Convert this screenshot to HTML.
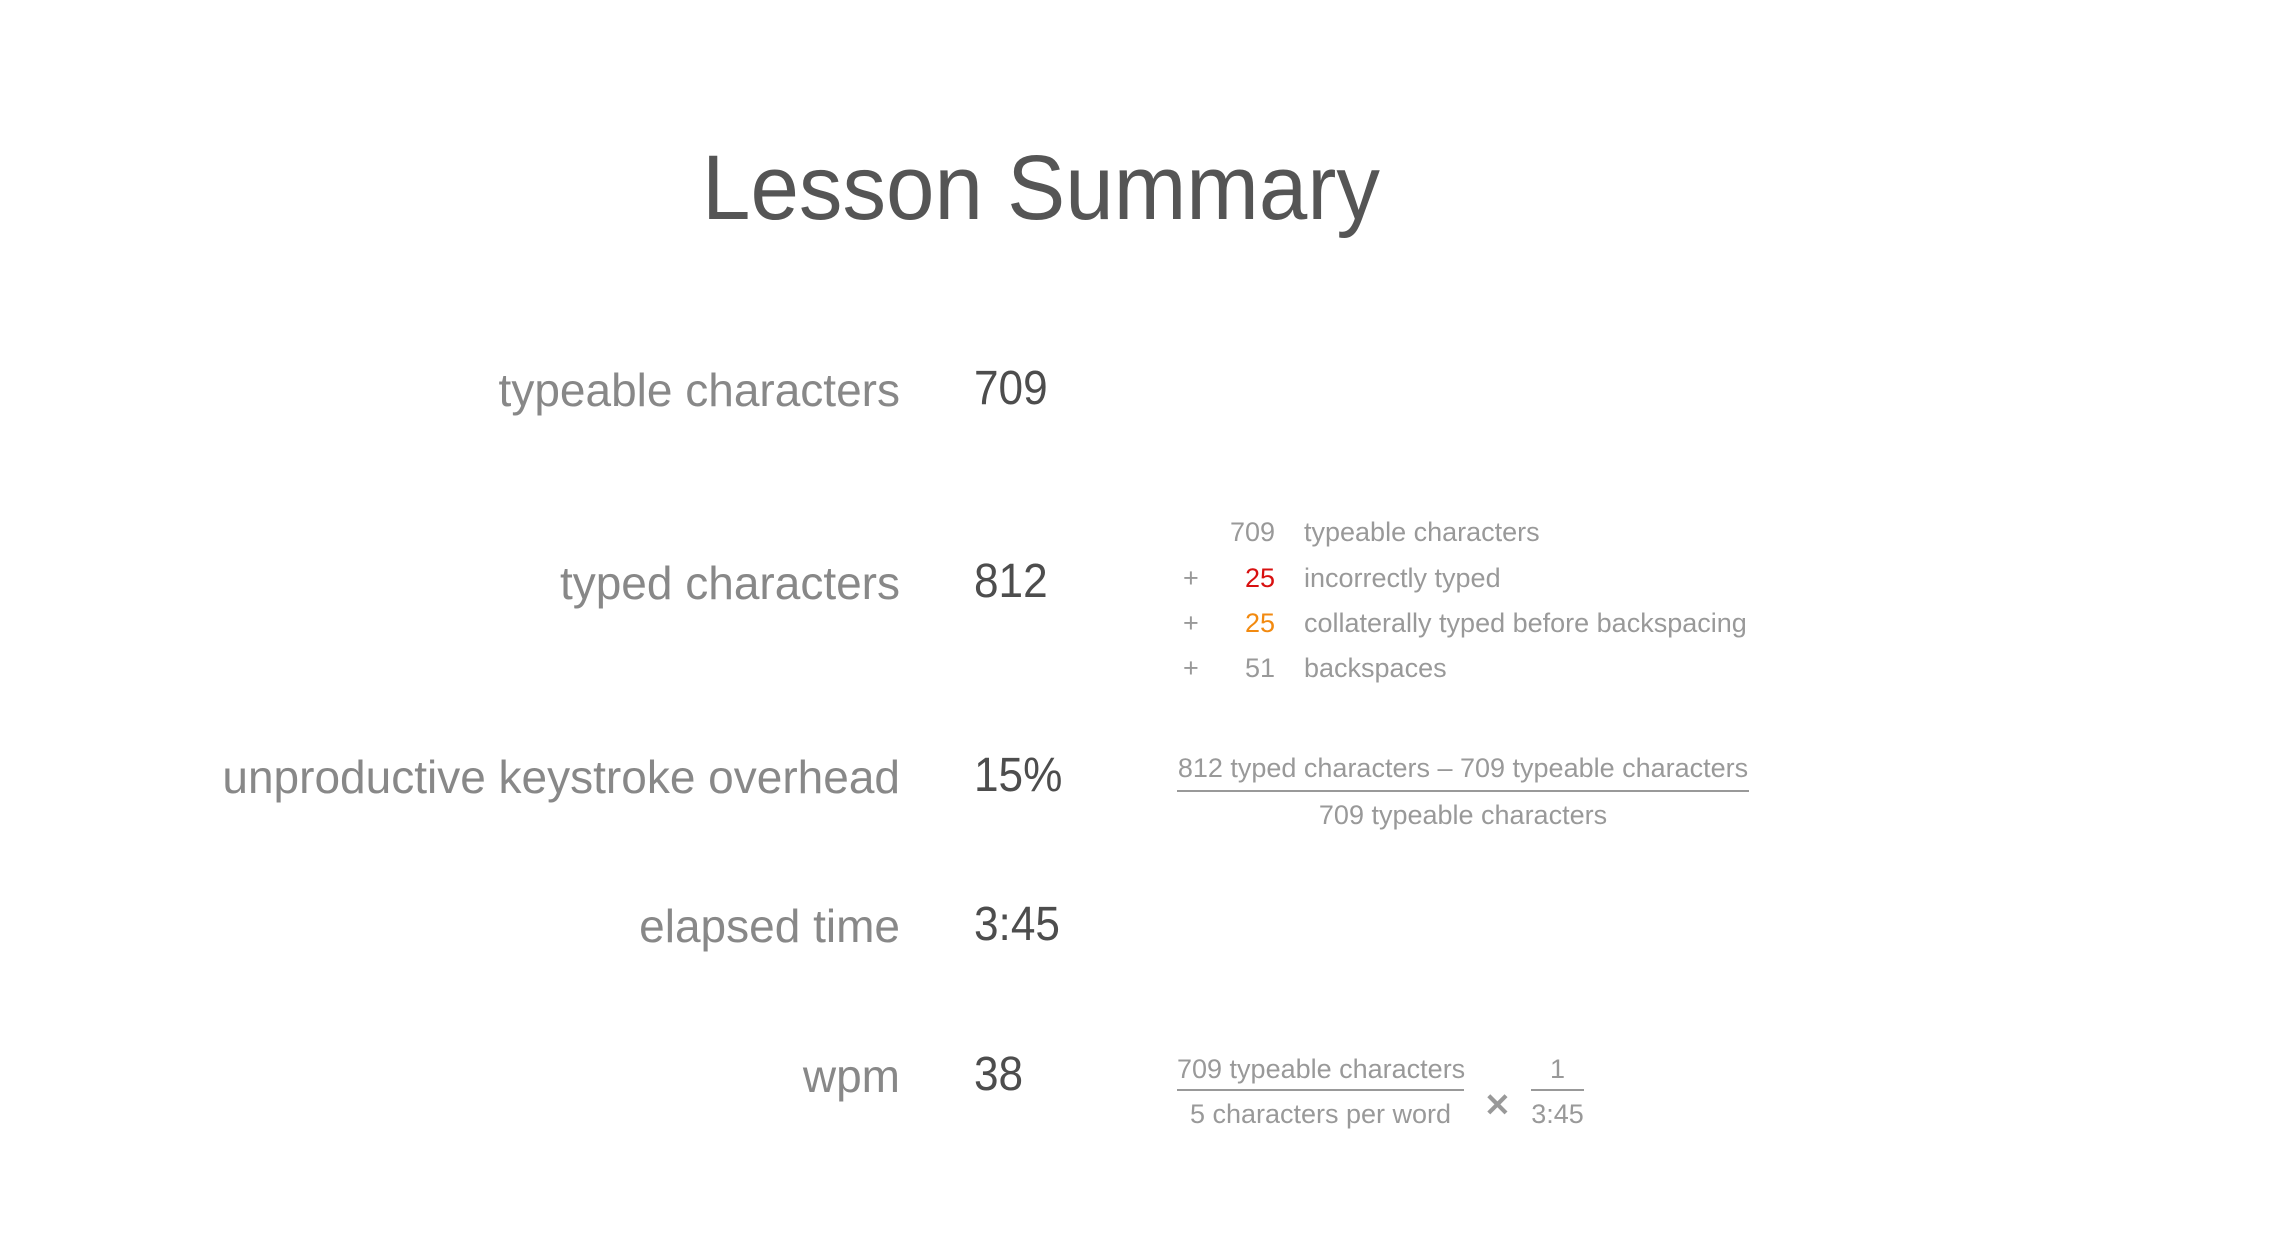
<!DOCTYPE html>
<html><head><meta charset="utf-8"><style>
html,body{margin:0;padding:0;background:#fff;}
body{width:2286px;height:1246px;position:relative;overflow:hidden;font-family:"Liberation Sans",sans-serif;}
.a{position:absolute;line-height:1;white-space:nowrap;}
.t{left:702px;top:142px;font-size:92px;color:#555;transform:scaleX(.947);transform-origin:left;}
.l{right:1386px;font-size:46px;color:#888;}
.v{left:974px;font-size:48px;color:#4d4d4d;transform:scaleX(.92);transform-origin:left;}
.s{font-size:27px;color:#999;}
.n{right:1011px;}
.p{left:1183px;}
.x{left:1304px;}
.f{position:absolute;text-align:center;font-size:27px;color:#999;line-height:1;white-space:nowrap;}
.line{position:absolute;height:2px;background:#999;}
</style></head><body>
<div class="a t">Lesson Summary</div>

<div class="a l" style="top:367px">typeable characters</div>
<div class="a v" style="top:365px">709</div>
<div class="a l" style="top:560px">typed characters</div>
<div class="a v" style="top:558px">812</div>
<div class="a l" style="top:754px">unproductive keystroke overhead</div>
<div class="a v" style="top:752px">15%</div>
<div class="a l" style="top:903px">elapsed time</div>
<div class="a v" style="top:901px">3:45</div>
<div class="a l" style="top:1053px">wpm</div>
<div class="a v" style="top:1051px">38</div>

<div class="a s n" style="top:519px">709</div>
<div class="a s x" style="top:519px">typeable characters</div>
<div class="a s p" style="top:565px">+</div>
<div class="a s n" style="top:565px;color:#d81010">25</div>
<div class="a s x" style="top:565px">incorrectly typed</div>
<div class="a s p" style="top:610px">+</div>
<div class="a s n" style="top:610px;color:#f28a10">25</div>
<div class="a s x" style="top:610px">collaterally typed before backspacing</div>
<div class="a s p" style="top:655px">+</div>
<div class="a s n" style="top:655px">51</div>
<div class="a s x" style="top:655px">backspaces</div>

<div class="f" style="left:1177px;width:572px;top:755px">812 typed characters – 709 typeable characters</div>
<div class="line" style="left:1177px;width:572px;top:790px"></div>
<div class="f" style="left:1177px;width:572px;top:802px">709 typeable characters</div>

<div class="f" style="left:1177px;width:287px;top:1056px">709 typeable characters</div>
<div class="line" style="left:1177px;width:287px;top:1089px"></div>
<div class="f" style="left:1177px;width:287px;top:1101px">5 characters per word</div>
<div class="a" style="left:1484px;top:1089px;font-size:32px;font-weight:bold;color:#999">✕</div>
<div class="f" style="left:1531px;width:53px;top:1056px">1</div>
<div class="line" style="left:1531px;width:53px;top:1089px"></div>
<div class="f" style="left:1531px;width:53px;top:1101px">3:45</div>
</body></html>
